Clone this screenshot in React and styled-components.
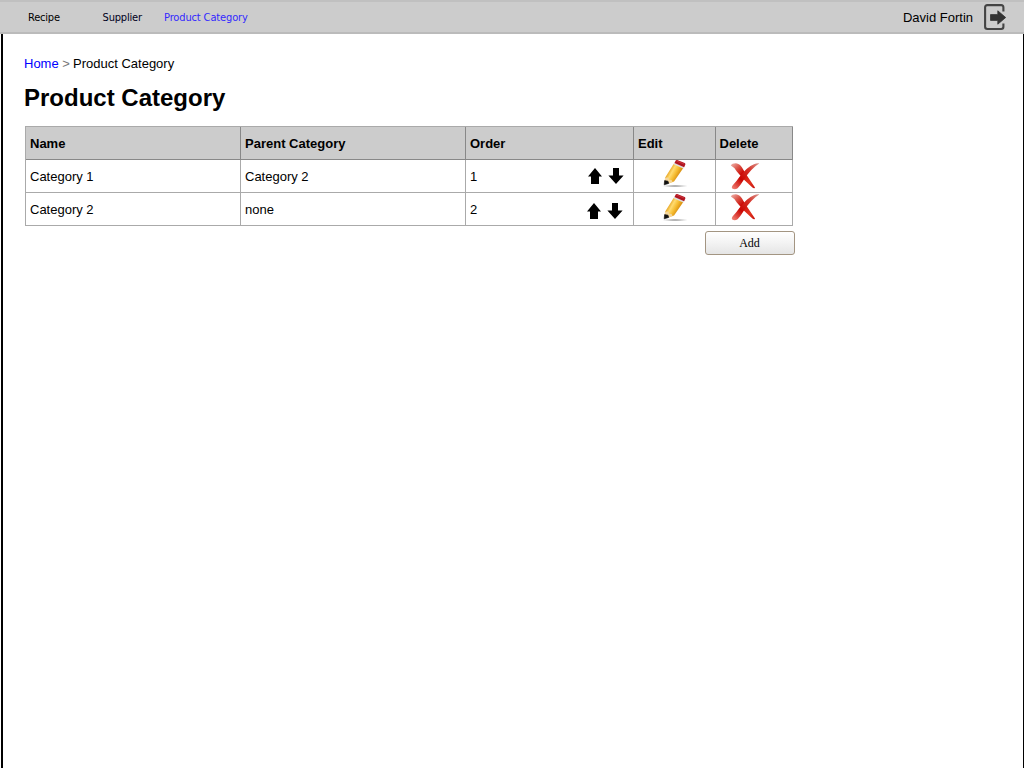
import React from "react";
import styled, { createGlobalStyle } from "styled-components";

const GlobalStyle = createGlobalStyle`
  * { box-sizing: border-box; }
  body {
    margin: 0;
    background: #fff;
    color: #000;
    font-family: "Liberation Sans", Arial, sans-serif;
    font-size: 13px;
  }
`;

const Page = styled.div`
  height: 768px;
  display: flex;
  flex-direction: column;
  overflow: hidden;
`;

const TopBar = styled.header`
  height: 34px;
  flex: none;
  display: flex;
  align-items: center;
  justify-content: space-between;
  padding: 0 17px 0 28px;
  background: #ccc;
  border-top: 2px solid #c0c0c0;
  border-bottom: 2px solid #bbb;
`;

const Nav = styled.nav`
  display: flex;
  padding-top: 2px;
  font-family: "DejaVu Sans Condensed", "DejaVu Sans", sans-serif;
  font-stretch: condensed;
  font-size: 11px;
  line-height: 14px;
`;

const NavLink = styled.a`
  width: ${(p) => p.$width}px;
  color: ${(p) => p.$color || "#000"};
  letter-spacing: ${(p) => p.$spacing || "-0.2px"};
  white-space: nowrap;
`;

const User = styled.div`
  display: flex;
  align-items: center;
  gap: 10px;
  line-height: 15px;
  svg { display: block; }
`;

const Content = styled.main`
  flex: 1;
  margin-left: 1px;
  padding: 22px 0 0 21px;
  border-left: 2px solid #000;
  border-right: 1px solid #000;
`;

const Breadcrumb = styled.div`
  line-height: 15px;
  a { color: #00f; }
  span { color: #777; margin-right: -0.5px; }
`;

const Title = styled.h1`
  margin: 13px 0 14px;
  font-size: 24px;
  line-height: 28px;
`;

const Table = styled.table`
  width: 768px;
  margin-left: 1px;
  table-layout: fixed;
  border-collapse: separate;
  border-spacing: 0;
  border: solid #aaa;
  border-width: 1px 0 0 1px;
`;

const HeadCell = styled.th`
  width: ${(p) => p.$width}px;
  height: 33px;
  padding: 0 4px;
  text-align: left;
  background: #ccc;
  border: solid #888;
  border-width: 0 1px 1px 0;
  &:last-child { padding-left: 3.5px; }
`;

const Cell = styled.td`
  height: 33px;
  padding: 0 4px;
  border: solid #aaa;
  border-width: 0 1px 1px 0;
  svg { display: block; }
`;

const IconCell = styled(Cell)`
  padding: 0 0 0 ${(p) => p.$left}px;
  vertical-align: top;
  svg {
    overflow: visible;
    margin-top: ${(p) => p.$shift || 0}px;
  }
`;

const OrderRow = styled.div`
  display: flex;
  justify-content: space-between;
  align-items: center;
`;

const Arrows = styled.div`
  display: flex;
  gap: 5px;
  padding: ${(p) => (p.$last ? "3px 6px 0 0" : "0 5px 0 0")};
`;

const Actions = styled.div`
  width: 771px;
  display: flex;
  justify-content: flex-end;
  padding-top: 5px;
`;

const AddButton = styled.button`
  width: 90px;
  height: 24px;
  padding: 0 1px 0 0;
  border: 1px solid #a39582;
  border-radius: 3px;
  background: linear-gradient(#fff, #f4f4f4 45%, #e5e5e5);
  font: 12px/20px "Liberation Serif", "Times New Roman", serif;
  color: #000;
`;

const LogoutIcon = () => (
  <svg width="24" height="28" viewBox="0 0 24 28">
    <path d="M20.4 8.5V4.4Q20.4 2.1 18.2 2.1H4.4Q2.1 2.1 2.1 4.4V23.8Q2.1 26 4.4 26H18.2Q20.4 26 20.4 23.8V20.5" fill="none" stroke="#444" strokeWidth="2.1" />
    <path d="M7.5 11.6H14.8V7.8L22.7 14.5L14.8 21.2V17.4H7.5Z" fill="#333" stroke="#333" strokeWidth=".8" />
  </svg>
);

const Arrow = ({ down }) => (
  <svg width="16" height="16" viewBox="0 0 16 16">
    <path d={down ? "M5 0H11V7.5H15.6L8 16L.4 7.5H5Z" : "M8 0L15 8.5H12V16H4V8.5H1Z"} />
  </svg>
);

const Pencil = () => (
  <svg width="28" height="28" viewBox="0 0 28 28">
    <defs>
      <linearGradient id="wood" x1="7" y1="11" x2="16" y2="16" gradientUnits="userSpaceOnUse">
        <stop offset="0" stopColor="#e9a928" />
        <stop offset=".3" stopColor="#ffdb70" />
        <stop offset=".65" stopColor="#f6bd32" />
        <stop offset="1" stopColor="#dc9413" />
      </linearGradient>
      <radialGradient id="shade">
        <stop offset="0" stopColor="#777" />
        <stop offset="1" stopColor="#aaa" stopOpacity=".25" />
      </radialGradient>
    </defs>
    <ellipse cx="13" cy="26" rx="12" ry="1.1" fill="url(#shade)" />
    <path d="M3 17.8L11.8 3.8L21.5 7.8L12 21.5L7 23.2L3 21Z" fill="url(#wood)" />
    <path d="M3 17.8L2.2 24.3L10.5 22.2L9.6 20L7.2 19.8L6.2 17.6Z" fill="#f5d69c" />
    <path d="M2.6 20.6L2.2 24.8L6.8 23.4L6 21.2Z" fill="#111" stroke="#111" strokeWidth=".6" />
    <path d="M12.6 2.5L11.6 4.3L21.2 8.4L22.2 6.6Z" fill="#ddd" />
    <path d="M12.5 3L13.7 .5Q14.2 -.3 15.2 0L22.7 2.9Q23.7 3.4 23.3 4.6L22.2 7.2Z" fill="#b01420" />
    <path d="M14.6 1L22.2 4" stroke="#d94348" strokeWidth=".7" />
  </svg>
);

const Cross = () => (
  <svg width="30" height="30" viewBox="0 0 30 30">
    <defs>
      <linearGradient id="stroke1" x1="1" y1="4" x2="25" y2="29" gradientUnits="userSpaceOnUse">
        <stop offset="0" stopColor="#eeb0a8" />
        <stop offset=".22" stopColor="#da5145" />
        <stop offset=".42" stopColor="#cb0905" />
        <stop offset=".75" stopColor="#e53420" />
        <stop offset="1" stopColor="#c3120c" />
      </linearGradient>
      <linearGradient id="stroke2" x1="28" y1="4" x2="3" y2="29" gradientUnits="userSpaceOnUse">
        <stop offset="0" stopColor="#d98b83" />
        <stop offset=".3" stopColor="#d63127" />
        <stop offset=".65" stopColor="#ca0502" />
        <stop offset="1" stopColor="#ef8174" />
      </linearGradient>
    </defs>
    <path d="M.8 5.6Q2 3.2 6 3.3Q9.6 3.6 12 7.5Q16 14.5 25 27.4Q24.4 29 22.4 27.6Q14 20.5 7 11.8Q4.3 7.2 .8 5.6Z" fill="url(#stroke1)" />
    <path d="M29.2 3.4Q20.8 8.3 13 21Q10 26 7.6 28.2Q4.8 30 2.2 28.6Q1 26.8 3.6 24.2Q6 22 9.4 17Q17 6.9 24 4.2Q26.5 3.2 29.2 3.4Z" fill="url(#stroke2)" />
  </svg>
);

const columns = [
  ["Name", 215], ["Parent Category", 225], ["Order", 168], ["Edit", 82], ["Delete", 77],
];
const rows = [["Category 1", "Category 2", "1"], ["Category 2", "none", "2"]];

export default function App() {
  return (
    <Page>
      <GlobalStyle />
      <TopBar>
        <Nav>
          <NavLink $width={74.6}>Recipe</NavLink>
          <NavLink $width={61.4} $color="#000020">Supplier</NavLink>
          <NavLink $width={90} $color="#3328ff" $spacing="-0.13px">Product Category</NavLink>
        </Nav>
        <User>David Fortin <LogoutIcon /></User>
      </TopBar>
      <Content>
        <Breadcrumb><a>Home</a> <span>&gt;</span> Product Category</Breadcrumb>
        <Title>Product Category</Title>
        <Table>
          <thead>
            <tr>{columns.map(([label, width]) => <HeadCell key={label} $width={width}>{label}</HeadCell>)}</tr>
          </thead>
          <tbody>
            {rows.map(([name, parent, order], i) => (
              <tr key={name}>
                <Cell>{name}</Cell>
                <Cell>{parent}</Cell>
                <Cell>
                  <OrderRow>
                    {order}
                    <Arrows $last={i === 1}><Arrow /><Arrow down /></Arrows>
                  </OrderRow>
                </Cell>
                <IconCell $left={28} $shift={i ? 1 : 0}><Pencil /></IconCell>
                <IconCell $left={14} $shift={i ? -2 : 0}><Cross /></IconCell>
              </tr>
            ))}
          </tbody>
        </Table>
        <Actions><AddButton>Add</AddButton></Actions>
      </Content>
    </Page>
  );
}
